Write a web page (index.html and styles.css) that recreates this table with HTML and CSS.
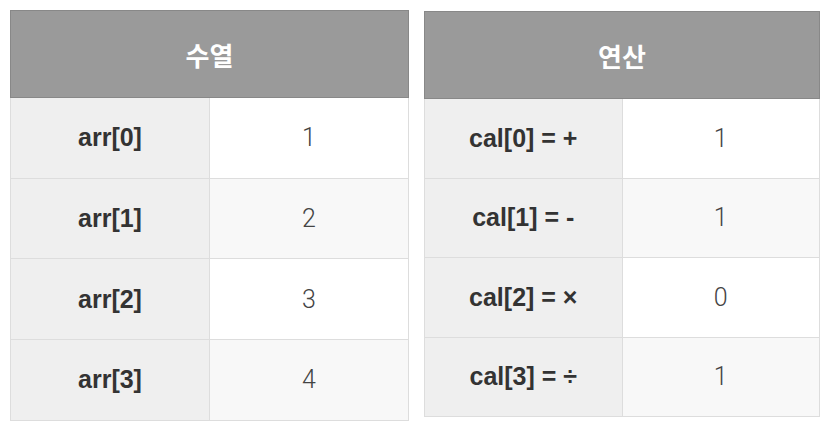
FILE: index.html
```html
<!DOCTYPE html>
<html lang="ko">
<head>
<meta charset="utf-8">
<link rel="stylesheet" href="styles.css">
</head>
<body>
<div class="wrap">
  <table class="grid grid-left">
    <thead><tr><th colspan="2">수열</th></tr></thead>
    <tbody>
      <tr><td class="key">arr[0]</td><td class="val">1</td></tr>
      <tr><td class="key">arr[1]</td><td class="val">2</td></tr>
      <tr><td class="key">arr[2]</td><td class="val">3</td></tr>
      <tr><td class="key">arr[3]</td><td class="val">4</td></tr>
    </tbody>
  </table>
  <table class="grid grid-right">
    <thead><tr><th colspan="2">연산</th></tr></thead>
    <tbody>
      <tr><td class="key">cal[0] = +</td><td class="val">1</td></tr>
      <tr><td class="key">cal[1] = -</td><td class="val">1</td></tr>
      <tr><td class="key">cal[2] = ×</td><td class="val">0</td></tr>
      <tr><td class="key">cal[3] = ÷</td><td class="val">1</td></tr>
    </tbody>
  </table>
</div>
</body>
</html>
```
FILE: styles.css
```css
html, body {
  margin: 0;
  padding: 0;
  background: #ffffff;
}
.wrap {
  display: flex;
  align-items: flex-start;
  gap: 15px;
  padding: 10px 0 0 10px;
}
.grid {
  border-collapse: collapse;
  table-layout: fixed;
  font-family: "Liberation Sans", Arial, sans-serif;
}
.grid-left {
  width: 399px;
}
.grid-right {
  width: 396px;
  margin-top: 1px;
}
.grid th {
  background: #9a9a9a;
  border: 1px solid #888888;
  color: #ffffff;
  font-family: "Noto Sans CJK KR", sans-serif;
  font-weight: 700;
  font-size: 26px;
  height: 86px;
  padding: 0;
  text-align: center;
  vertical-align: middle;
}
.grid td {
  border: 1px solid #dddddd;
  padding: 0;
  text-align: center;
  vertical-align: middle;
}
.grid-left td { height: 79.7px; }
.grid-right td { height: 78.5px; }
.grid .key {
  width: 50%;
  background: #efefef;
  color: #333333;
  font-weight: 700;
  font-size: 25px;
}
.grid .val {
  background: #ffffff;
  color: #444444;
  font-family: Roboto, "Liberation Sans", sans-serif;
  font-weight: 300;
  font-size: 25px;
}
.grid tbody tr:nth-child(even) .val {
  background: #f8f8f8;
}
```
